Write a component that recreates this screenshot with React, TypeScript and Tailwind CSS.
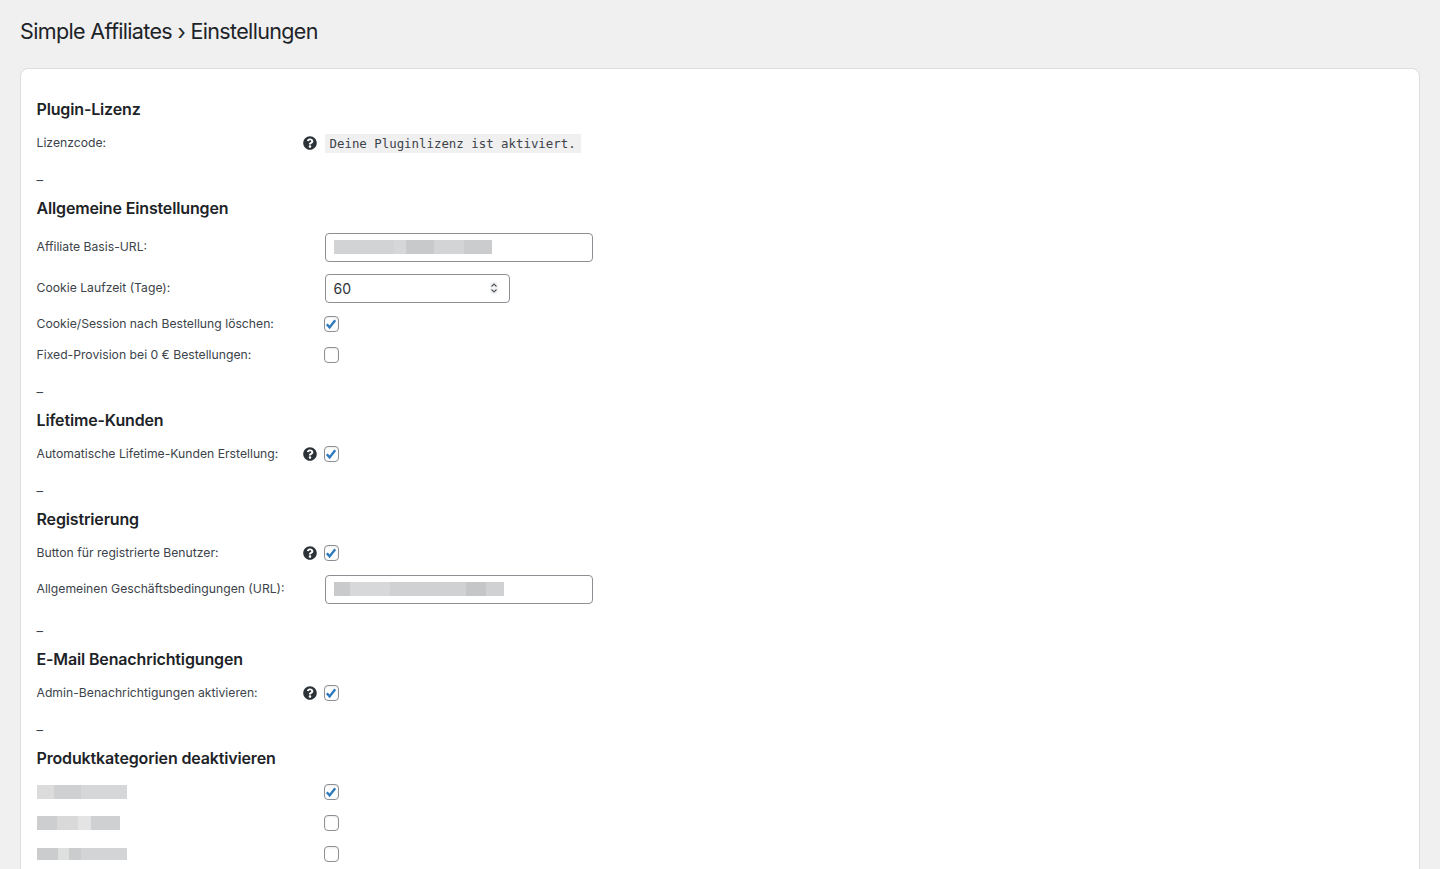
import { FaQuestionCircle } from 'react-icons/fa';
import type { ReactNode } from 'react';

type Segment = [number, string];

function Redacted({ segments, height = 14 }: { segments: Segment[]; height?: number }) {
  return (
    <div className="flex" style={{ height }}>
      {segments.map(([width, color], i) => (
        <div key={i} style={{ width, backgroundColor: color }} />
      ))}
    </div>
  );
}

function Checkbox({ checked = false }: { checked?: boolean }) {
  return (
    <div className="flex h-[15.5px] w-[15.5px] items-center justify-center rounded-[4px] border border-[#8c8f94] bg-white shadow-[inset_0_1px_2px_rgba(0,0,0,0.08)]">
      {checked && (
        <svg width="12" height="12" viewBox="0 0 12 12" fill="none">
          <path d="M1.8 6.2 L4.6 9.4 L10.2 2.2" stroke="#2f79bd" strokeWidth="2.4" />
        </svg>
      )}
    </div>
  );
}

function Input({ children, width }: { children: ReactNode; width: string }) {
  return (
    <div className={`ml-px flex h-[29px] items-center justify-between rounded-[4px] border border-[#8c8f94] bg-white pl-2 pr-[11px] ${width}`}>
      {children}
    </div>
  );
}

function Row({ label, help, tall, children }: { label: ReactNode; help?: boolean; tall?: boolean; children: ReactNode }) {
  return (
    <div className={`grid grid-cols-[266px_21px_1fr] items-center ${tall ? 'min-h-[30px]' : 'min-h-5'}`}>
      <div className="text-[12.2px] leading-5 text-[#3c434a]">{label}</div>
      <div>{help && <FaQuestionCircle className="text-[14px] text-[#2c3338]" />}</div>
      <div>{children}</div>
    </div>
  );
}

function Section({ title, children, last }: { title: string; children: ReactNode; last?: boolean }) {
  return (
    <section>
      <h2 className="flex h-7 items-center text-[16px] font-semibold tracking-[-0.15px] text-[#1d2327]">{title}</h2>
      <div className="mt-[10px] flex flex-col gap-[11px]">{children}</div>
      {!last && <div className="mb-[3px] mt-[18px] flex h-5 items-center text-[13px] text-[#3c434a]">–</div>}
    </section>
  );
}

export default function App() {
  return (
    <div className="h-screen overflow-hidden bg-[#f0f0f1] px-5 font-['Inter',sans-serif]">
      <h1 className="flex h-[68px] items-center pb-[5px] text-[21.5px] font-normal tracking-[-0.65px] text-[#1d2327]">
        Simple Affiliates › Einstellungen
      </h1>
      <div className="min-h-[900px] rounded-lg border border-[#dcdcde] bg-white px-[15.5px] pt-[26px]">
        <Section title="Plugin-Lizenz">
          <Row label="Lizenzcode:" help>
            <code className="ml-px block h-[19px] w-fit bg-[#f0f0f1] px-[5px] font-['DejaVu_Sans_Mono',monospace] text-[12.4px] leading-[19px] text-[#3c434a]">
              Deine Pluginlizenz ist aktiviert.
            </code>
          </Row>
        </Section>

        <Section title="Allgemeine Einstellungen">
          <Row label="Affiliate Basis-URL:" tall>
            <Input width="w-[268px]">
              <Redacted segments={[[60, '#d2d3d4'], [12, '#d6d7d8'], [28, '#c8c9ca'], [30, '#d3d4d5'], [28, '#cbcccd']]} />
            </Input>
          </Row>
          <Row label="Cookie Laufzeit (Tage):" tall>
            <Input width="w-[185px]">
              <span className="text-[14px] text-[#2c3338]">60</span>
              <svg className="rounded-[3px] bg-[#f3f3f4]" width="8" height="12" viewBox="0 0 8 12" fill="none" stroke="#50575e" strokeWidth="1.1">
                <path d="M1.5 4.5 L4 2 L6.5 4.5" />
                <path d="M1.5 7.5 L4 10 L6.5 7.5" />
              </svg>
            </Input>
          </Row>
          <Row label="Cookie/Session nach Bestellung löschen:">
            <Checkbox checked />
          </Row>
          <Row label="Fixed-Provision bei 0 € Bestellungen:">
            <Checkbox />
          </Row>
        </Section>

        <Section title="Lifetime-Kunden">
          <Row label="Automatische Lifetime-Kunden Erstellung:" help>
            <Checkbox checked />
          </Row>
        </Section>

        <Section title="Registrierung">
          <Row label="Button für registrierte Benutzer:" help>
            <Checkbox checked />
          </Row>
          <Row label="Allgemeinen Geschäftsbedingungen (URL):" tall>
            <Input width="w-[268px]">
              <Redacted segments={[[16, '#c9cacb'], [40, '#d7d8d9'], [76, '#d0d1d2'], [20, '#c5c6c7'], [18, '#d0d1d2']]} />
            </Input>
          </Row>
        </Section>

        <Section title="E-Mail Benachrichtigungen">
          <Row label="Admin-Benachrichtigungen aktivieren:" help>
            <Checkbox checked />
          </Row>
        </Section>

        <Section title="Produktkategorien deaktivieren" last>
          <Row label={<Redacted segments={[[17, '#dcdcdd'], [27, '#cfd0d1'], [46, '#d6d7d8']]} />}>
            <Checkbox checked />
          </Row>
          <Row label={<Redacted segments={[[20, '#cdcecf'], [21, '#d9d9da'], [13, '#e4e4e5'], [29, '#cfd0d1']]} />}>
            <Checkbox />
          </Row>
          <Row label={<Redacted height={12} segments={[[21, '#cbcccd'], [11, '#dedfdf'], [12, '#cbcccd'], [46, '#d3d4d5']]} />}>
            <Checkbox />
          </Row>
        </Section>
      </div>
    </div>
  );
}
